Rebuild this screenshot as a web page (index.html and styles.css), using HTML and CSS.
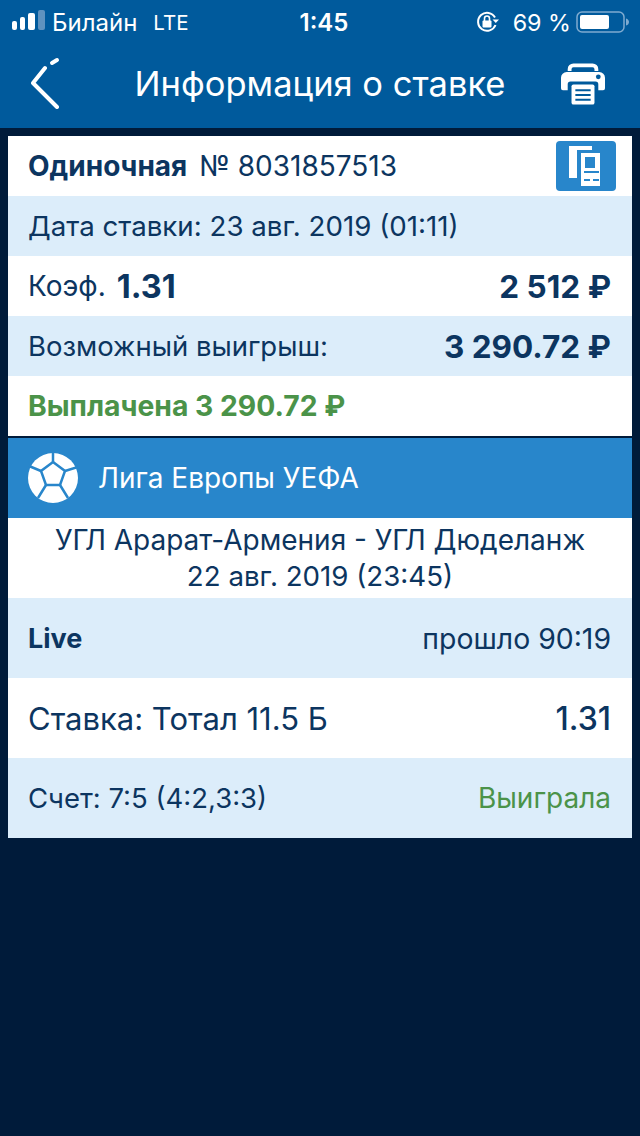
FILE: index.html
```html
<!DOCTYPE html>
<html lang="ru">

<head>
    <meta charset="UTF-8">
    <link rel="stylesheet" href="styles.css">
    <title>Информация о ставке</title>
</head>

<body>
    <header id="top">
        <div id="status">
            <div class="status-left">
                <svg class="signal" width="33" height="20" viewBox="0 0 33 20">
                    <rect x="0" y="11" width="5" height="9" rx="2" fill="#fff"/>
                    <rect x="8" y="7" width="5" height="13" rx="2" fill="#fff"/>
                    <rect x="16" y="3" width="7" height="17" rx="2" fill="#fff"/>
                    <rect x="26" y="0" width="7" height="20" rx="2" fill="#5f92bf"/>
                </svg>
                <span>Билайн</span>
                <span class="lte">LTE</span>
            </div>
            <div class="status-time">1:45</div>
            <div class="status-right">
                <svg width="24" height="22" viewBox="0 0 24 22">
                    <path d="M19 6.500A9 9 0 1 0 19.500 14" fill="none" stroke="#fff" stroke-width="2"/>
                    <path d="M16.500 8.500h6.500l-3.200 3.500z" fill="#fff"/>
                    <rect x="6.500" y="9.500" width="9" height="7" rx="1" fill="#fff"/>
                    <path d="M8.500 10V7.500a2.500 2.500 0 0 1 5 0V10" fill="none" stroke="#fff" stroke-width="1.600"/>
                </svg>
                <span class="percent">69 %</span>
                <svg width="54" height="24" viewBox="0 0 54 24">
                    <rect x="1" y="2" width="47" height="20" rx="5" fill="none" stroke="#7fabd0" stroke-width="1.500"/>
                    <rect x="4" y="5" width="29" height="14" rx="2" fill="#fff"/>
                    <path d="M50 8.500c2 .5 3 2 3 3.500s-1 3-3 3.500z" fill="#7fabd0"/>
                </svg>
            </div>
        </div>
        <div id="nav">
            <svg class="back" width="30" height="52" viewBox="0 0 30 52">
                <path d="M27 50L3 26L15 11" fill="none" stroke="#fff" stroke-width="4" stroke-linecap="round" stroke-linejoin="round"/>
                <path d="M22 6L27 3" fill="none" stroke="#fff" stroke-width="4" stroke-linecap="round"/>
            </svg>
            <h1 id="head">Информация о ставке</h1>
            <svg class="printer" width="44" height="43" viewBox="0 0 46 44">
                <path d="M7 9V7a6 6 0 0 1 6-6h20a6 6 0 0 1 6 6v2h-4V7a2 2 0 0 0-2-2H13a2 2 0 0 0-2 2v2z" fill="#fff"/>
                <path d="M6 10h34a6 6 0 0 1 6 6v11a2 2 0 0 1-2 2h-5v-6a3 3 0 0 0-3-3H10a3 3 0 0 0-3 3v6H2a2 2 0 0 1-2-2V16a6 6 0 0 1 6-6z" fill="#fff"/>
                <circle cx="39" cy="15" r="2.500" fill="#005a9c"/>
                <rect x="11" y="23" width="24" height="21" rx="2" fill="#fff"/>
                <path d="M15 29h16M15 34h16M15 39h16" stroke="#005a9c" stroke-width="2"/>
            </svg>
        </div>
    </header>

    <div id="content">
        <div class="row white first">
            <div class="row-left">
                <b class="bet-type">Одиночная</b>
                <span>№ 8031857513</span>
            </div>
            <div class="copy-btn">
                <svg width="31" height="40" viewBox="0 0 31 40">
                    <path d="M0 0h23v4H8v28H0z" fill="#fff"/>
                    <path fill-rule="evenodd" d="M12 7h19v33H12zM16 11v11h10V11zM15 25v2h15v-2zM15 33v2h6v-2zM24 33v2h6v-2z" fill="#fff"/>
                </svg>
            </div>
        </div>
        <div class="row blue narrow">Дата ставки: 23 авг. 2019 (01:11)</div>
        <div class="row white">
            <div class="row-left tight">
                <span>Коэф.</span>
                <b class="coef">1.31</b>
            </div>
            <b class="sum">2 512 ₽</b>
        </div>
        <div class="row blue">
            <span class="gain">Возможный выигрыш:</span>
            <b class="sum">3 290.72 ₽</b>
        </div>
        <div class="row white">
            <b class="paid">Выплачена 3 290.72 ₽</b>
        </div>

        <div id="league">
            <svg width="50" height="50" viewBox="0 0 50 50">
                <circle cx="25" cy="25" r="25" fill="#fff"/>
                <path d="M25 9L37 18L32 32H18L13 18Z" fill="none" stroke="#2886cb" stroke-width="2.500"/>
                <path d="M25 9V0M37 18L50 14M13 18L1 13M18 32L10 45M32 32L40 45" fill="none" stroke="#2886cb" stroke-width="2.500"/>
            </svg>
            <span>Лига Европы УЕФА</span>
        </div>

        <div class="match">
            <div>УГЛ Арарат-Армения - УГЛ Дюделанж</div>
            <div class="match-date">22 авг. 2019 (23:45)</div>
        </div>
        <div class="row tall blue">
            <b class="live">Live</b>
            <span class="elapsed">прошло 90:19</span>
        </div>
        <div class="row tall white big">
            <span>Ставка: Тотал 11.5 Б</span>
            <span class="odds">1.31</span>
        </div>
        <div class="row tall blue">
            <span class="gain">Счет: 7:5 (4:2,3:3)</span>
            <span class="won">Выиграла</span>
        </div>
    </div>
</body>

</html>
```

FILE: styles.css
```css
html,
body {
    margin: 0;
    padding: 0;
}

body {
    width: 640px;
    height: 1136px;
    overflow: hidden;
    background-color: #001b3a;
    font-family: Inter, Roboto, "Liberation Sans", sans-serif;
    color: #0c3560;
}

h1 {
    margin: 0 0 0 5px;
    font-size: 34.500px;
    font-weight: 400;
}

#top {
    height: 128px;
    background-color: #005a9c;
    color: white;
}

#status {
    height: 44px;
    padding: 0 10px 0 12px;
    display: grid;
    grid-template-columns: 1fr auto 1fr;
    align-items: center;
    font-size: 24px;
}

.status-left {
    display: flex;
    align-items: center;
}

.signal {
    margin: 0 7px 4px 0;
}

.lte {
    margin-left: 16px;
    font-size: 20.500px;
}

.status-time {
    margin-left: 6px;
    font-weight: 600;
}

.status-right {
    display: flex;
    align-items: center;
    justify-content: flex-end;
    gap: 13px;
}

.percent {
    margin-right: -8px;
    font-size: 23.300px;
}

#nav {
    height: 84px;
    padding: 0 35px 6px 30px;
    display: grid;
    grid-template-columns: 1fr auto 1fr;
    align-items: center;
    box-sizing: border-box;
}

#head {
    color: white;
}

.printer {
    justify-self: end;
}

#content {
    margin: 8px 8px 0;
    background-color: white;
}

.row {
    height: 60px;
    padding: 0 21px 0 20px;
    display: flex;
    align-items: center;
    justify-content: space-between;
    font-size: 28px;
}

.row.tall {
    height: 80px;
}

.row.first {
    padding-right: 16px;
}

.row.narrow {
    font-size: 27.700px;
}

.white {
    background-color: white;
}

.blue {
    background-color: #dcedfa;
}

.row-left {
    display: flex;
    align-items: center;
    gap: 12px;
}

.row-left.tight {
    gap: 11px;
}

.bet-type {
    font-weight: 700;
}

.coef {
    font-size: 32.500px;
}

.sum {
    font-size: 31.500px;
}

.gain {
    font-size: 27.500px;
}

.paid {
    color: #4b9349;
    font-size: 28.300px;
}

.copy-btn {
    width: 60px;
    height: 50px;
    display: flex;
    align-items: center;
    justify-content: center;
    background-color: #2886cb;
    border-radius: 4px;
}

.copy-btn svg {
    margin-right: 3px;
}

#league {
    height: 80px;
    padding: 0 20px;
    display: flex;
    align-items: center;
    gap: 20px;
    background-color: #2886cb;
    color: white;
    font-size: 28px;
    border-top: 2px solid #001b3a;
}

.match {
    height: 80px;
    display: flex;
    flex-direction: column;
    align-items: center;
    justify-content: center;
    font-size: 28px;
    line-height: 36px;
}

.match-date {
    font-size: 27.700px;
}

.live {
    font-size: 27px;
    font-weight: 700;
}

.elapsed {
    font-size: 28.400px;
}

.big {
    font-size: 31px;
}

.odds {
    font-size: 32px;
    font-weight: 500;
}

.won {
    color: #4b9349;
}
```
